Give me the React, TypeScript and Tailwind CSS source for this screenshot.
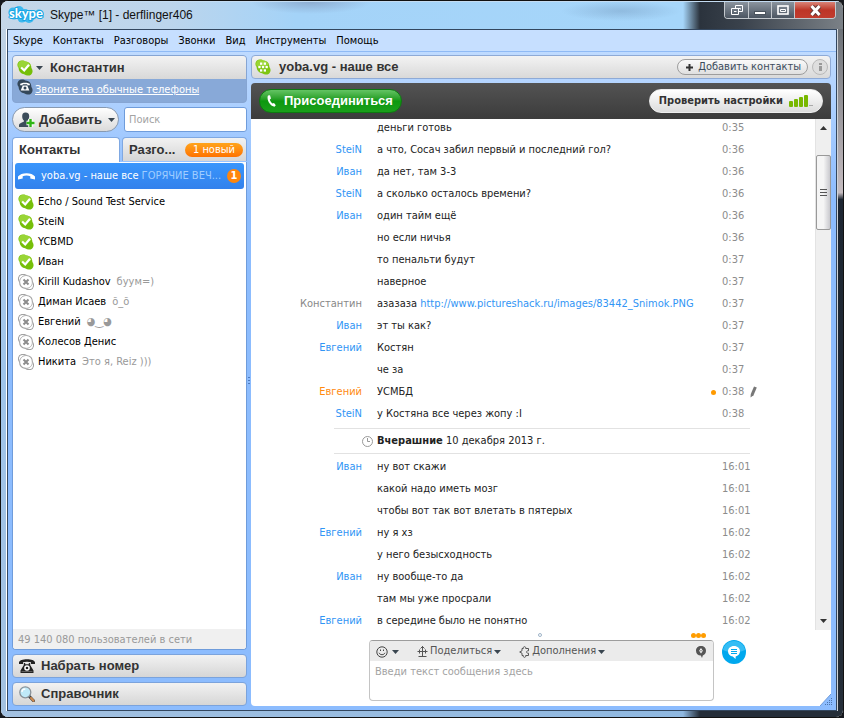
import React, { useState } from 'react';

const menuItems = ['Skype', 'Контакты', 'Разговоры', 'Звонки', 'Вид', 'Инструменты', 'Помощь'];

const contacts = [
  { name: 'Echo / Sound Test Service', online: true },
  { name: 'SteiN', online: true },
  { name: 'YCBMD', online: true },
  { name: 'Иван', online: true },
  { name: 'Kirill Kudashov', mood: 'буум=)' },
  { name: 'Диман Исаев', mood: 'õ_õ' },
  { name: 'Евгений', mood: '◕‿◕' },
  { name: 'Колесов Денис' },
  { name: 'Никита', mood: 'Это я, Reiz )))' }
];

const todayMessages = [
  { text: 'деньги готовь', time: '0:35' },
  { author: 'SteiN', text: 'а что, Сосач забил первый и последний гол?', time: '0:36' },
  { author: 'Иван', text: 'да нет, там 3-3', time: '0:36' },
  { author: 'SteiN', text: 'а сколько осталось времени?', time: '0:36' },
  { author: 'Иван', text: 'один тайм ещё', time: '0:36' },
  { text: 'но если ничья', time: '0:36' },
  { text: 'то пенальти будут', time: '0:37' },
  { text: 'наверное', time: '0:37' },
  { author: 'Константин', own: true, text: 'азазаза', link: 'http://www.pictureshack.ru/images/83442_Snimok.PNG', time: '0:37' },
  { author: 'Иван', text: 'эт ты как?', time: '0:37' },
  { author: 'Евгений', text: 'Костян', time: '0:37' },
  { text: 'че за', time: '0:37' },
  { author: 'Евгений', edited: true, text: 'УСМБД', time: '0:38' },
  { author: 'SteiN', text: 'у Костяна все через жопу :I', time: '0:38' }
];

const olderMessages = [
  { author: 'Иван', text: 'ну вот скажи', time: '16:01' },
  { text: 'какой надо иметь мозг', time: '16:01' },
  { text: 'чтобы вот так вот влетать в пятерых', time: '16:01' },
  { author: 'Евгений', text: 'ну я хз', time: '16:02' },
  { text: 'у него безысходность', time: '16:02' },
  { author: 'Иван', text: 'ну вообще-то да', time: '16:02' },
  { text: 'там мы уже просрали', time: '16:02' },
  { author: 'Евгений', text: 'в середине было не понятно', time: '16:02' }
];

const BLOB =
  'M4.8 0.4C6.6 0.3 7.6 0.8 8.6 1.5C12.6 1.9 14.4 4.6 14.4 8C15.4 9.4 15.7 10.6 15.5 12C15 14.6 13 15.8 10.6 15.6C9.4 15.5 8.6 15 7.6 14.4C4 14 1.6 11.4 1.6 7.8C0.6 6.6 0.3 5.4 0.5 4C0.8 2 2.6 0.5 4.8 0.4Z';

const OnlineIcon = () => (
  <svg className="h-4 w-4 shrink-0" viewBox="0 0 16 16">
    <path d={BLOB} fill="#76bf08" />
    <path d="M4.800 0.800C8 0.800 12.400 2 13.700 5.400C11 8.600 5 9 1.800 7.400C0 4.400 2 1 4.800 0.800Z" fill="#a5dc45" opacity="0.75" />
    <path d="M4.100 7.500L7.200 10.400L12 4.700" fill="none" stroke="#fff" strokeWidth="2.200" />
  </svg>
);

const OfflineIcon = () => (
  <svg className="h-4 w-4 shrink-0" viewBox="0 0 16 16">
    <path d={BLOB} fill="#fff" stroke="#a2a2a2" strokeWidth="1.100" />
    <path d="M8.600 1.500C5 1.400 2 3.500 1.600 7.800M14.400 8C14.400 12 11.500 14.500 7.600 14.400" fill="none" stroke="#b4b4b4" />
    <path d="M5.500 5.500L10.500 10.500M10.500 5.500L5.500 10.500" stroke="#8c8c8c" strokeWidth="2" />
  </svg>
);

const GroupIcon = () => (
  <svg className="h-4 w-4 shrink-0" viewBox="0 0 16 16">
    <path d={BLOB} fill="#7fc510" />
    <path d="M4.800 0.800C8 0.800 12.400 2 13.700 5.400C11 8 5 8 1.800 7.200C0 4.400 2 1 4.800 0.800Z" fill="#a5dc45" opacity="0.7" />
    <g fill="#fff">
      <rect x="5" y="3.500" width="2.300" height="2.300" /><rect x="8.700" y="3.500" width="2.300" height="2.300" />
      <rect x="3.300" y="6.900" width="2.300" height="2.300" /><rect x="6.900" y="6.900" width="2.300" height="2.300" /><rect x="10.500" y="6.900" width="2.300" height="2.300" />
      <rect x="5" y="10.300" width="2.300" height="2.300" /><rect x="8.700" y="10.300" width="2.300" height="2.300" />
    </g>
  </svg>
);

const PhoneBlobIcon = () => (
  <svg className="h-4 w-4 shrink-0" viewBox="0 0 16 16">
    <path d={BLOB} fill="#344759" />
    <path d="M3.200 6.200V4.800C5 3.300 11 3.300 12.800 4.800V6.200H10.300V5.200H5.700V6.200Z" fill="#fff" />
    <path d="M5.700 6.600H10.300L12.300 11.400H3.700Z" fill="#fff" />
    <circle cx="8" cy="8.900" r="1.500" fill="#344759" />
  </svg>
);

const SkypeLogo = () => (
  <svg className="h-[18px] w-[36px] shrink-0" viewBox="0 0 36 18">
    <g fill="#3cb8ee">
      <circle cx="5" cy="6" r="4.500" /><circle cx="11" cy="5" r="5" /><circle cx="17" cy="8" r="5" />
      <circle cx="24" cy="9" r="5" /><circle cx="31" cy="8" r="4.500" /><circle cx="14" cy="12" r="4.500" />
      <circle cx="21" cy="12" r="5" /><circle cx="6" cy="9" r="4.500" />
    </g>
    <text x="1" y="12" fill="#fff" stroke="#18a5e4" strokeWidth="2" paintOrder="stroke" strokeLinejoin="round" fontSize="13" fontWeight="700" fontFamily="Lato, sans-serif">skype</text>
  </svg>
);

const Arrow = ({ className = '' }) => (
  <svg className={`h-1 w-[7px] shrink-0 ${className}`} viewBox="0 0 7 4">
    <path d="M0 0H7L3.500 4Z" fill="#3a4650" />
  </svg>
);

const AddUserIcon = () => (
  <svg className="h-4 w-[17px] shrink-0" viewBox="0 0 17 16">
    <path d="M6.500 0.500C9 0.500 10.400 2 10.200 4.500C10.100 6.500 9.300 7.600 8.700 8.300V9.800L12.500 11.500V15H0V12.800C0.500 11.200 3 10.700 4.800 9.800V8.300C3.800 7.500 3.200 6.500 3.200 4.500C3 2 4.200 0.500 6.500 0.500Z" fill="#3b4c5a" />
    <path d="M11.500 7V15M7.500 11H15.500" stroke="#fff" strokeWidth="4.400" />
    <path d="M11.500 7V15M7.500 11H15.500" stroke="#2fb516" strokeWidth="2.400" />
  </svg>
);

const SignalIcon = () => (
  <svg className="h-3 w-6" viewBox="0 0 24 12">
    <g fill="#78b800">
      <rect x="0" y="6" width="4" height="6" rx="1" /><rect x="5" y="4" width="4" height="8" rx="1" />
      <rect x="10" y="2" width="4" height="10" rx="1" /><rect x="15" y="0" width="4" height="12" rx="1" />
    </g>
    <rect x="20" y="10" width="4" height="1" fill="#aaa" />
  </svg>
);

const TelephoneIcon = () => (
  <svg className="h-4 w-4" viewBox="0 0 16 16" fill="#222">
    <path d="M0 4.500C0 0 16 0 16 4.500V6H12V4.300C10 3.400 6 3.400 4 4.300V6H0Z" />
    <path d="M4.800 5H6.200V6.300H9.800V5H11.200V7L14.500 12.500V15H1.500V12.500L4.800 7Z" />
    <circle cx="8" cy="10" r="2.800" fill="#fff" /><circle cx="8" cy="10" r="1.300" />
    <path d="M2.500 13.500H13.500" stroke="#888" strokeWidth="0.600" />
  </svg>
);

const MagnifierIcon = () => (
  <svg className="h-4 w-4" viewBox="0 0 16 16">
    <path d="M10 10L14.500 14.700" stroke="#444" strokeWidth="3" strokeLinecap="round" />
    <path d="M12 12L14.500 14.700" stroke="#d08a4e" strokeWidth="2" strokeLinecap="round" />
    <circle cx="6.300" cy="6.300" r="5.500" fill="#bfe9f8" stroke="#8a9299" strokeWidth="1.300" />
    <path d="M3 6C3 4 4.500 3 6.300 3" fill="none" stroke="#fff" strokeWidth="1.400" />
  </svg>
);

const WindowButtons = () => (
  <div className="flex h-[17px] overflow-hidden rounded-b border border-t-0 border-[#c3c8cd]">
    <button aria-label="Compact view" className="flex w-6 items-center justify-center border-r border-[#c3c8cd] bg-linear-to-b from-[#8b949e] to-[#4c5662]">
      <svg className="h-[10px] w-3" viewBox="0 0 12 10" fill="none" stroke="#fff">
        <path d="M4.500 0.500H11.500V6.500H7.500M4.500 0.500V3M0.500 3.500H7.500V9.500H0.500ZM7 3.500H9.500V4.500" /><path d="M3 6.500H5.500" />
      </svg>
    </button>
    <button aria-label="Minimize" className="flex w-[23px] items-center justify-center border-r border-[#c3c8cd] bg-linear-to-b from-[#8b949e] to-[#4c5662]">
      <svg className="h-[10px] w-3" viewBox="0 0 12 10"><rect x="0.500" y="6.500" width="11" height="3" fill="#fff" stroke="#4a535d" /></svg>
    </button>
    <button aria-label="Maximize" className="flex w-[23px] items-center justify-center border-r border-[#c3c8cd] bg-linear-to-b from-[#8b949e] to-[#4c5662]">
      <svg className="h-[10px] w-3" viewBox="0 0 12 10" fill="none" stroke="#fff"><rect x="1" y="1" width="10" height="8" strokeWidth="1.600" /><path d="M3.500 4.500H8.500V6.500H3.500Z" /></svg>
    </button>
    <button aria-label="Close" className="flex w-10 items-center justify-center bg-linear-to-b from-[#d98377] via-[#bd3527] to-[#c13c2e]">
      <svg className="h-[11px] w-[13px]" viewBox="0 0 13 11">
        <path d="M2.500 1L10.500 10M10.500 1L2.500 10" stroke="#6b3a38" strokeWidth="5" />
        <path d="M2.500 1L10.500 10M10.500 1L2.500 10" stroke="#fff" strokeWidth="3" />
      </svg>
    </button>
  </div>
);

const MessageList = ({ messages }) => (
  <ul className="flex flex-col gap-[6px]">
    {messages.map((msg, i) => (
      <li key={i} className="flex h-4 leading-4">
        <span className={`w-[111px] shrink-0 text-right ${msg.own ? 'text-[#888]' : msg.edited ? 'text-[#ff8a10]' : 'text-[#3195f5]'}`}>
          {msg.author}
        </span>
        <span className="ml-[15px] flex-1 whitespace-nowrap">
          {msg.text}
          {msg.link && <> <a href={msg.link} className="text-[#3195f5]">{msg.link}</a></>}
        </span>
        {msg.edited && <span className="mr-[6px] h-[5px] w-[5px] self-center rounded-full bg-[#ff9a00]" />}
        <span className="flex w-[93px] shrink-0 items-center text-[#8c8c8c]">
          {msg.time}
          {msg.edited && (
            <svg className="ml-[6px] h-3 w-[7px]" viewBox="0 0 7 12">
              <path d="M4 0.500L6.800 1.600L3.500 9.300L0.500 11.500L0.800 8Z" fill="#777" />
            </svg>
          )}
        </span>
      </li>
    ))}
  </ul>
);

const Sidebar = () => {
  const [query, setQuery] = useState('');
  return (
    <aside className="flex w-[235px] shrink-0 flex-col">
      <div className="overflow-hidden rounded border border-[#86a5d3] bg-[#88a9d8]">
        <button className="flex h-[23px] w-full items-center bg-linear-to-b from-[#f3f3f3] to-[#d8d8d8] pl-1 font-['Liberation_Sans',sans-serif] text-[13px] font-bold text-[#333]">
          <OnlineIcon />
          <Arrow className="ml-[3px]" />
          <span className="ml-[7px]">Константин</span>
        </button>
        <div className="flex h-[23px] pl-1">
          <PhoneBlobIcon />
          <a href="#call" className="ml-[2px] self-center text-white underline">Звоните на обычные телефоны</a>
        </div>
      </div>

      <div className="mt-1 flex items-center gap-[5px]">
        <button className="flex h-[25px] w-[107px] shrink-0 items-center rounded-full border border-[#8799b0] bg-linear-to-b from-white to-[#dadada] pl-[6px] font-['Liberation_Sans',sans-serif] text-[13px] font-bold text-[#333]">
          <AddUserIcon />
          <span className="ml-[3px]">Добавить</span>
          <Arrow className="ml-[6px]" />
        </button>
        <input
          type="text"
          aria-label="Поиск"
          placeholder="Поиск"
          value={query}
          onChange={(e) => setQuery(e.target.value)}
          className="h-[25px] min-w-0 flex-1 rounded-[3px] border border-[#6f9cdb] bg-white px-1 placeholder:text-[#a3a3a3]"
        />
      </div>

      <div className="mt-[5px] flex gap-[2px] font-['Liberation_Sans',sans-serif] text-[13px] font-bold text-[#333]">
        <button className="h-[25px] w-[108px] rounded-t border border-b-0 border-[#7fa8e2] bg-white pl-[6px] text-left">Контакты</button>
        <button className="flex h-6 flex-1 items-center justify-between rounded-t border border-b-0 border-[#7fa8e2] bg-linear-to-b from-[#f2f2f2] to-[#d6d6d6] pr-[3px] pl-[6px]">
          Разго...
          <span className="rounded-full bg-linear-to-b from-[#ffa41c] to-[#ff7200] px-2 font-['DejaVu_Sans_Condensed','DejaVu_Sans',sans-serif] text-[11px] leading-[14px] font-normal text-white">1 новый</span>
        </button>
      </div>

      <div className="flex flex-1 flex-col overflow-hidden rounded-b border border-t-0 border-[#6f9cdb] bg-white">
        <button className="mx-[2px] mt-[1px] mb-[2px] flex h-[26px] items-center rounded-[3px] bg-linear-to-b from-[#3996fc] to-[#3381ec] px-[3px] text-white">
          <svg className="h-2 w-[17px] shrink-0" viewBox="0 0 17 8">
            <path d="M0 7.500V4.500C3 0 14 0 17 4.500V7.500L12.300 6.500V4.300C10 3.300 7 3.300 4.700 4.300V6.500Z" fill="#fff" />
          </svg>
          <span className="ml-[6px] whitespace-nowrap">yoba.vg - наше все</span>
          <span className="ml-[3px] whitespace-nowrap text-[#a0cdff]">ГОРЯЧИЕ ВЕЧ...</span>
          <span className="ml-auto flex h-[14px] w-[14px] shrink-0 items-center justify-center rounded-full bg-[#ff860d] font-bold">1</span>
        </button>
        <ul className="pt-px">
          {contacts.map((contact) => (
            <li key={contact.name}>
              <button className="flex h-5 w-full items-center pl-[5px] text-left">
                {contact.online ? <OnlineIcon /> : <OfflineIcon />}
                <span className="ml-1 text-black">{contact.name}</span>
                {contact.mood && <span className="ml-[6px] text-[#999]">{contact.mood}</span>}
              </button>
            </li>
          ))}
        </ul>
        <div className="mt-auto h-5 bg-[#f0f0f0] px-[5px] leading-[22px] text-[#999]">49 140 080 пользователей в сети</div>
      </div>

      <button className="mt-1 flex h-6 items-center rounded border border-[#7ba3dc] bg-linear-to-b from-[#f2f2f2] to-[#d6d6d6] pl-[6px] font-['Liberation_Sans',sans-serif] text-[13px] font-bold text-[#333]">
        <TelephoneIcon />
        <span className="ml-[6px]">Набрать номер</span>
      </button>
      <button className="mt-1 flex h-6 items-center rounded border border-[#7ba3dc] bg-linear-to-b from-[#f2f2f2] to-[#d6d6d6] pl-[6px] font-['Liberation_Sans',sans-serif] text-[13px] font-bold text-[#333]">
        <MagnifierIcon />
        <span className="ml-[6px]">Справочник</span>
      </button>
    </aside>
  );
};

const Scrollbar = () => (
  <div className="flex w-4 shrink-0 flex-col items-center border-l border-[#e3e3e3] bg-[#efefef]">
    <button aria-label="Scroll up" className="flex h-[36px] w-full justify-center pt-[7px]">
      <svg className="h-1 w-[7px]" viewBox="0 0 7 4"><path d="M0 4H7L3.500 0Z" fill="#333" /></svg>
    </button>
    <div className="flex h-[75px] w-[15px] flex-col items-center justify-center gap-[2px] rounded-[2px] border border-[#999] bg-linear-to-r from-[#f5f5f5] from-50% to-[#c9c9ce]">
      <span className="h-px w-[7px] bg-[#555]" />
      <span className="h-px w-[7px] bg-[#555]" />
      <span className="h-px w-[7px] bg-[#555]" />
    </div>
    <button aria-label="Scroll down" className="mt-auto flex h-[11px] w-full justify-center">
      <svg className="h-1 w-[7px]" viewBox="0 0 7 4"><path d="M0 0H7L3.500 4Z" fill="#333" /></svg>
    </button>
  </div>
);

const Composer = () => {
  const [draft, setDraft] = useState('');
  return (
    <div className="relative flex h-[76px] shrink-0 rounded-b bg-white pl-[118px]">
      <div className="flex flex-1 flex-col">
        <div className="flex h-[10px] items-center justify-end pr-2">
          <span className="mr-[149px] h-1 w-1 rounded-full border border-[#9fb4c8]" />
          <span className="flex">
            <span className="h-[5px] w-[5px] rounded-full bg-[#ff9d00]" />
            <span className="h-[5px] w-[5px] rounded-full bg-[#ff9d00]" />
            <span className="h-[5px] w-[5px] rounded-full bg-[#ff9d00]" />
          </span>
        </div>
        <div className="flex h-[61px] flex-col overflow-hidden rounded border border-[#c4c4c4] border-t-[#9c9c9c]">
          <div className="flex h-5 items-center bg-[#ebebeb] pt-px pr-[7px] pl-[6px] text-[#555]">
            <button aria-label="Смайлики" className="flex items-center gap-1">
              <svg className="h-3 w-3" viewBox="0 0 12 12" fill="none" stroke="#444">
                <circle cx="6" cy="6" r="5.200" /><path d="M3 6.800C4 9.300 8 9.300 9 6.800" /><path d="M4.500 3.500V5M7.500 3.500V5" />
              </svg>
              <Arrow />
            </button>
            <button className="ml-[18px] flex items-center gap-[2px]">
              <svg className="h-[11px] w-[11px]" viewBox="0 0 11 11" fill="none" stroke="#555">
                <path d="M5.500 0V10M0.500 5.500H10.500M2.500 3.500V7.500M8.500 3.500V7.500M3.500 2.500L5.500 0.500L7.500 2.500M1.500 10.500H9.500" />
              </svg>
              <span>Поделиться</span>
              <Arrow />
            </button>
            <button className="ml-[18px] flex items-center gap-[2px]">
              <svg className="h-3 w-[11px]" viewBox="0 0 11 12" fill="none" stroke="#555">
                <path d="M3 2.500H4.300C3.800 0 7.200 0 6.700 2.500H9.500V4.800C7 4.200 7 7.800 9.500 7.200V9.500H6.700C7.200 12 3.800 12 4.300 9.500H3V7.200L0.700 6L3 4.800Z" />
              </svg>
              <span>Дополнения</span>
              <Arrow />
            </button>
            <button aria-label="Пожаловаться" className="ml-auto">
              <svg className="h-3 w-[10px]" viewBox="0 0 10 12">
                <path d="M5 0C8 0 10 2 10 4.800C10 7.300 8.600 8.800 6.800 9.400L6 12L4.800 9.600C2 9.500 0 7.500 0 4.800C0 2 2 0 5 0Z" fill="#555" />
                <path d="M5 2L6.800 4.800L5 7.600L3.200 4.800Z" fill="#fff" /><circle cx="5" cy="4.800" r="0.700" fill="#555" />
              </svg>
            </button>
          </div>
          <textarea
            aria-label="Сообщение"
            placeholder="Введи текст сообщения здесь"
            value={draft}
            onChange={(e) => setDraft(e.target.value)}
            className="flex-1 resize-none px-[5px] pt-[3px] leading-4 placeholder:text-[#a3a3a3]"
          />
        </div>
      </div>
      <div className="w-[117px] pt-[10px] pl-2">
        <button aria-label="Отправить сообщение" className="block rounded-full">
          <svg className="h-6 w-6" viewBox="0 0 24 24">
            <circle cx="12" cy="12" r="12" fill="#00a8ee" />
            <path d="M1 10C3 -2 21 -2 23 10C17 13 7 13 1 10Z" fill="#35bdf4" />
            <path d="M12 6C15.500 6 18 8.300 18 11.300C18 13.900 16 16 13.700 16.500L13.500 19L10.800 16.600C8 16.200 6 14 6 11.300C6 8.300 8.500 6 12 6Z" fill="#fff" />
            <path d="M9 9.500H15M9 11.500H15M9 13.500H15" stroke="#00a8ee" />
          </svg>
        </button>
      </div>
      {/* Resize grip over the window corner */}
      <svg className="absolute right-[-5px] bottom-[-4px] h-4 w-4" viewBox="0 0 16 16">
        <path d="M11 0H16V16H0V12Z" fill="#8cbcfe" />
        <path d="M11 0L0 12" stroke="#6f9cdb" />
        <g fill="#4d74ab">
          <path d="M11 4h1v1h-1zM9 6h1v1h-1zM11 6h1v1h-1zM7 8h1v1h-1zM9 8h1v1h-1zM11 8h1v1h-1zM5 10h1v1h-1zM7 10h1v1h-1zM9 10h1v1h-1zM11 10h1v1h-1z" />
        </g>
      </svg>
    </div>
  );
};

const Conversation = () => (
  <main className="flex min-w-0 flex-1 flex-col">
    <header className="flex h-6 items-center rounded border border-[#8eaad6] bg-linear-to-b from-[#f3f3f3] to-[#d9d9d9] pr-[2px] pl-[3px]">
      <GroupIcon />
      <h1 className="ml-2 flex-1 font-['Liberation_Sans',sans-serif] text-[13px] font-bold text-[#333]">yoba.vg - наше все</h1>
      <button className="flex h-4 items-center rounded-full border border-[#9d9d9d] bg-linear-to-b from-[#fafafa] to-[#e0e0e0] pr-[6px] pl-2 text-[#3c4c5c]">
        <svg className="h-[7px] w-[7px]" viewBox="0 0 7 7"><path d="M3.500 0V7M0 3.500H7" stroke="#333" strokeWidth="2" /></svg>
        <span className="ml-[5px]">Добавить контакты</span>
      </button>
      <button aria-label="Информация" className="ml-1 flex h-4 w-4 items-center justify-center rounded-full border border-[#b9b9b9] bg-[#dedede]">
        <svg className="h-2 w-[3px]" viewBox="0 0 3 8"><path d="M0 0H3V2H0ZM0 3H3V8H0Z" fill="#999" /></svg>
      </button>
    </header>

    <div className="mt-1 flex h-9 shrink-0 items-center justify-between rounded-t bg-linear-to-b from-[#535353] to-[#3c3c3c] pr-2 pl-2">
      <button className="flex h-6 items-center rounded-full border border-[#0d7a10] bg-linear-to-b from-[#63c463] via-[#0c980e] via-50% to-[#1ba01b] pr-2 pl-[7px] font-['Liberation_Sans',sans-serif] text-[13px] font-bold text-white">
        <svg className="h-3 w-[9px]" viewBox="0 0 9 12">
          <path d="M1 0.500L3 0.300L4 3.500L2.800 4.500C3.200 6.200 4.300 7.800 5.500 8.500L7 8L8.800 10.200L7.500 11.700C3 11.500 -0.800 4.500 1 0.500Z" fill="#fff" />
        </svg>
        <span className="ml-2">Присоединиться</span>
      </button>
      <button className="flex h-6 items-center gap-[6px] rounded-full border border-[#eee] bg-linear-to-b from-white to-[#dcdcdc] px-[9px] font-bold text-[#333]">
        Проверить настройки
        <SignalIcon />
      </button>
    </div>

    <div className="flex flex-1 bg-white">
      <div className="min-w-0 flex-1 pt-px pb-px text-[#222]">
        <MessageList messages={todayMessages} />
        <div className="mt-[6px] mr-[65px] mb-[5px] ml-[83px] flex h-[26px] items-center border-y border-[#e2e2e2] pl-7">
          <svg className="h-[11px] w-[11px]" viewBox="0 0 11 11" fill="none" stroke="#999">
            <circle cx="5.500" cy="5.500" r="5" /><path d="M5.500 2V5.500H8" />
          </svg>
          <span className="ml-1"><b>Вчерашние</b> 10 декабря 2013 г.</span>
        </div>
        <MessageList messages={olderMessages} />
      </div>
      <Scrollbar />
    </div>

    <Composer />
  </main>
);

export default function App() {
  return (
    <div className="bg-[#15181d]">
      <div className="flex min-h-screen flex-col overflow-hidden rounded-lg border border-[#111] bg-white font-['DejaVu_Sans_Condensed','DejaVu_Sans',sans-serif] text-[11px] text-[#222]">
        {/* Title bar */}
        <div className="flex h-7 shrink-0 items-start border-t border-[#c4dcf2] bg-[radial-gradient(ellipse_60px_12px_at_310px_0px,#7f94b899,transparent),radial-gradient(ellipse_60px_10px_at_620px_9px,#6f93b866,transparent),linear-gradient(90deg,#c5d7e8_0%,#bcd5ec_20%,#a4d3f8_35%,#a6d6fa_81%,#2b333d_83%,#3a424c_88%,#7b8187_100%)] px-[7px]">
          <div className="flex flex-1 items-center pt-[3px]">
            <SkypeLogo />
            <span className="ml-[6px] font-['Liberation_Sans',sans-serif] text-[12px] leading-5 text-[#111]">Skype™ [1] - derflinger406</span>
          </div>
          <WindowButtons />
        </div>

        <div className="flex flex-1">
          <div className="w-[6px] shrink-0 border-r border-white bg-linear-to-b from-[#c0d2e4] via-[#9fc4ea] to-[#a3c1e0]" />
          <div className="flex min-w-0 flex-1 flex-col border border-[#33475f] bg-linear-to-b from-[#c6dfff] to-[#8cbcfe] to-25%">
            <nav className="flex h-[22px] shrink-0 items-center gap-[10px] border-b border-[#8fbaf5] bg-[#c6dfff] px-[5px] pt-px text-black">
              {menuItems.map((item) => (
                <button key={item}>{item}</button>
              ))}
            </nav>
            <div className="flex flex-1 pt-[3px] pr-[5px] pb-1 pl-1">
              <Sidebar />
              <div className="flex w-1 shrink-0 flex-col items-center justify-center gap-[2px]">
                <span className="h-px w-[2px] bg-[#4f7cc0]" />
                <span className="h-px w-[2px] bg-[#4f7cc0]" />
                <span className="h-px w-[2px] bg-[#4f7cc0]" />
              </div>
              <Conversation />
            </div>
          </div>
          <div className="w-[6px] shrink-0 border-l border-[#d0d4d8] bg-[linear-gradient(180deg,#6d7278_0%,#c5bcc0_24%,#1d2632_25%,#252e39_100%)]" />
        </div>
        <div className="h-[6px] shrink-0 bg-[linear-gradient(90deg,#a3c1e0_0%,#8fb8e0_81%,#252e39_83%,#252e39_100%)]" />
      </div>
    </div>
  );
}
